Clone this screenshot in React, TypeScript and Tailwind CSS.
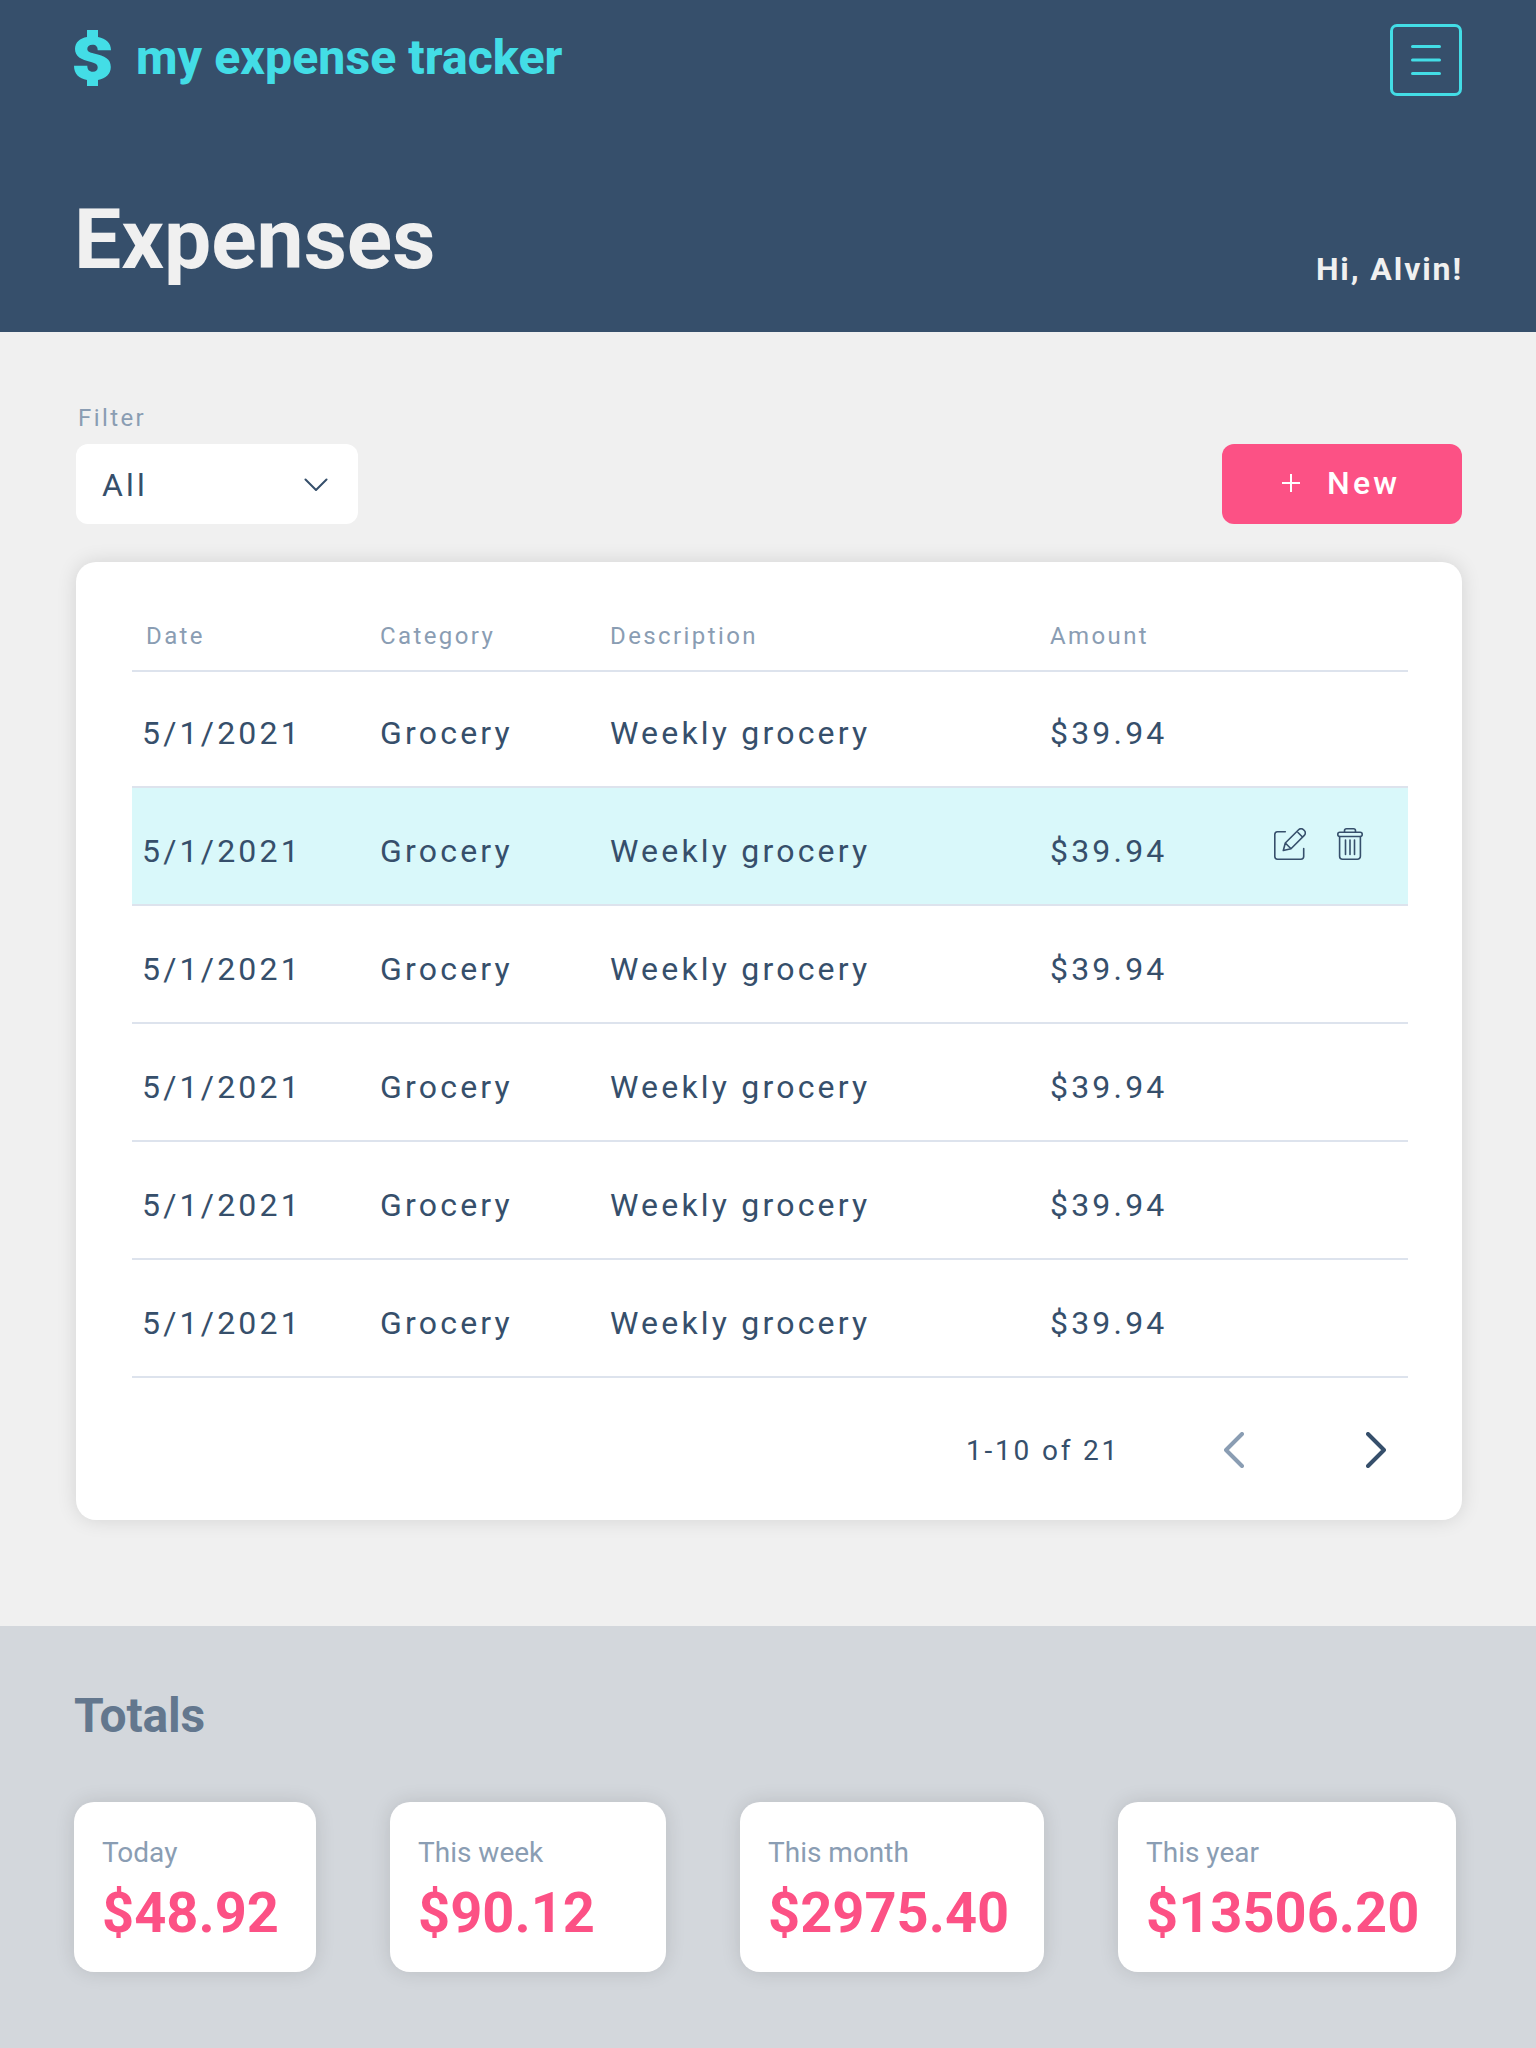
const rows = Array.from({ length: 6 }, (_, i) => ({
  date: "5/1/2021",
  category: "Grocery",
  description: "Weekly grocery",
  amount: "$39.94",
  active: i === 1,
}));

function DollarLogo() {
  return (
    <svg className="h-14 w-[37px]" viewBox="0 0 37 56" fill="currentColor">
      <path d="M13 0H24V7C32 8.500 37 13 37 20.300H23.700C23.700 16.500 22 14.700 18.500 14.700C15 14.700 13.300 16.300 13.300 19C13.300 21.500 15.500 22.500 20 23.500C31 26 36.800 29 36.800 37C36.800 44 32 48.500 24 50V56H13V50C5 48.500 0 44 0 35.700H13.300C13.300 39.500 15 41.700 19 41.700C22 41.700 23.700 40.200 23.700 37.500C23.700 34.500 21.500 33.200 17 32C7 29.500 1 26.500 1 19C1 12.500 6 8 13 7Z" />
    </svg>
  );
}

function EditIcon() {
  return (
    <svg className="h-8 w-8" viewBox="0 0 32 32" fill="none" stroke="currentColor" strokeWidth="1.6" strokeLinecap="round" strokeLinejoin="round">
      <path d="M11.3 3.7H3.4A2.8 2.8 0 0 0 .8 6.4v22.1a2.8 2.8 0 0 0 2.7 2.7h23.4a2.8 2.8 0 0 0 2.800-2.700V20.600" />
      <path d="M9.3 22.500l2-7.500L24.600 1.700a3.400 3.400 0 0 1 4.900 0l.8.8a3.400 3.400 0 0 1 0 4.900L17 20.700zM11.300 15l5.700 5.700M24 4.500l3.700 3.700" />
    </svg>
  );
}

function TrashIcon() {
  return (
    <svg className="h-8 w-[26px]" viewBox="0 0 26 32" fill="none" stroke="currentColor" strokeWidth="1.6" strokeLinecap="round" strokeLinejoin="round">
      <path d="M2.600 8.500v19.700a3 3 0 0 0 3 3h14.800a3 3 0 0 0 3-3V8.500" />
      <rect x=".8" y="4.300" width="24.400" height="4.200" rx="2" />
      <path d="M7.500 4.300V2.800a2 2 0 0 1 2-2h7a2 2 0 0 1 2 2v1.500M8.500 12v14.500M13 12v14.500M17.500 12v14.500" />
    </svg>
  );
}

function Total({ label, value, size }: { label: string; value: string; size: string }) {
  return (
    <div className={`h-[170px] rounded-[20px] bg-white pl-7 shadow-[0_0_20px_rgba(0,0,0,0.12)] ${size}`}>
      <div className="pt-[35px] text-[28px] leading-8 text-[#8a9db3]">{label}</div>
      <div className="mt-3 text-[56px] font-bold leading-16 text-[#fc5185]">{value}</div>
    </div>
  );
}

export default function App() {
  return (
    <div className="h-[2048px] w-[1536px] bg-[#f0f0f0] font-['Roboto',sans-serif] text-[#364f6b]">
      <header className="flex h-[332px] flex-col justify-between bg-[#364f6b] px-[74px] pb-11">
        <div className="flex items-start justify-between pt-6 text-[#43dde6]">
          <div className="flex items-center">
            <DollarLogo />
            <span className="ml-[25px] text-[48px] font-extrabold leading-[68px] tracking-[0.1px]">my expense tracker</span>
          </div>
          <button className="flex h-[72px] w-[72px] items-center justify-center rounded-[7px] border-3 border-[#43dde6]">
            <svg className="h-[30px] w-[30px]" viewBox="0 0 30 30" stroke="currentColor" strokeWidth="3" strokeLinecap="round">
              <path d="M1.500 1.500h27M1.500 15h27M1.500 28.500h27" />
            </svg>
          </button>
        </div>
        <div className="flex items-end justify-between text-[#f0f0f0]">
          <h1 className="text-[84px] font-bold leading-[96px]">Expenses</h1>
          <span className="-mr-px mb-[3px] text-[32px] font-bold leading-8 tracking-[1.9px]">Hi, Alvin!</span>
        </div>
      </header>

      <main className="h-[1294px] pl-[76px] pr-[74px] pt-[70px]">
        <div className="flex h-[122px] items-end justify-between">
          <div>
            <div className="pl-[2px] text-[24px] leading-8 tracking-[2.4px] text-[#8a9db3]">Filter</div>
            <button className="mt-[10px] flex h-20 w-[282px] items-center justify-between rounded-xl bg-white pl-[26px] pr-[30px]">
              <span className="pt-[2px] text-[32px] tracking-[3.2px]">All</span>
              <svg className="h-[13px] w-[24px]" viewBox="0 0 24 13" fill="none" stroke="currentColor" strokeWidth="2" strokeLinecap="round" strokeLinejoin="round">
                <path d="M1.500 1.500l10.500 10.500 10.500-10.500" />
              </svg>
            </button>
          </div>
          <button className="flex h-20 w-60 items-center rounded-xl bg-[#fc5185] pb-[2px] pl-[60px] text-white">
            <svg className="h-[18px] w-[18px]" viewBox="0 0 18 18" stroke="currentColor" strokeWidth="2">
              <path d="M9 0v18M0 9h18" />
            </svg>
            <span className="ml-[27px] text-[32px] font-medium leading-8 tracking-[3.2px]">New</span>
          </button>
        </div>

        <section className="mt-[38px] h-[958px] rounded-[20px] bg-white pl-[56px] pr-[54px] shadow-[0_0_20px_rgba(0,0,0,0.12)]">
          <div className="grid h-[110px] grid-cols-[248px_230px_440px_1fr] items-end border-b-2 border-[#dde3ed] pb-[18px] text-[24px] leading-8 tracking-[2.4px] text-[#8a9db3]">
            <span className="pl-[14px]">Date</span>
            <span>Category</span>
            <span>Description</span>
            <span>Amount</span>
          </div>
          {rows.map((r, i) => (
            <div
              key={i}
              className={`grid grid-cols-[248px_230px_440px_1fr] items-end border-b-2 border-[#dde3ed] pb-[33px] text-[32px] leading-10 tracking-[3.2px] ${i === 0 ? "h-[116px]" : "h-[118px]"} ${r.active ? "bg-[#d9f8fa]" : ""}`}
            >
              <span className="pl-[10px]">{r.date}</span>
              <span>{r.category}</span>
              <span>{r.description}</span>
              <span className="flex items-end justify-between">
                {r.amount}
                {r.active && (
                  <span className="mb-[11px] mr-[45px] flex gap-[31px]">
                    <EditIcon />
                    <TrashIcon />
                  </span>
                )}
              </span>
            </div>
          ))}
          <div className="flex h-[142px] items-center justify-end pr-[22px] pt-[2px]">
            <span className="pt-[2px] text-[28px] leading-8 tracking-[2.8px]">1-10 of 21</span>
            <svg className="ml-[104px] h-9 w-5 text-[#8a9db3]" viewBox="0 0 20 36" fill="none" stroke="currentColor" strokeWidth="4" strokeLinecap="round" strokeLinejoin="round">
              <path d="M18 2L2 18l16 16" />
            </svg>
            <svg className="ml-[122px] h-9 w-5" viewBox="0 0 20 36" fill="none" stroke="currentColor" strokeWidth="4" strokeLinecap="round" strokeLinejoin="round">
              <path d="M2 2l16 16L2 34" />
            </svg>
          </div>
        </section>
      </main>

      <footer className="h-[422px] bg-[#d3d7dc] pl-[74px] pt-[62px]">
        <h2 className="text-[48px] font-bold leading-[56px] tracking-[-0.2px] text-[#63778e]">Totals</h2>
        <div className="mt-[58px] flex gap-[74px]">
          <Total label="Today" value="$48.92" size="w-[242px]" />
          <Total label="This week" value="$90.12" size="w-[276px]" />
          <Total label="This month" value="$2975.40" size="w-[304px]" />
          <Total label="This year" value="$13506.20" size="w-[338px]" />
        </div>
      </footer>
    </div>
  );
}
